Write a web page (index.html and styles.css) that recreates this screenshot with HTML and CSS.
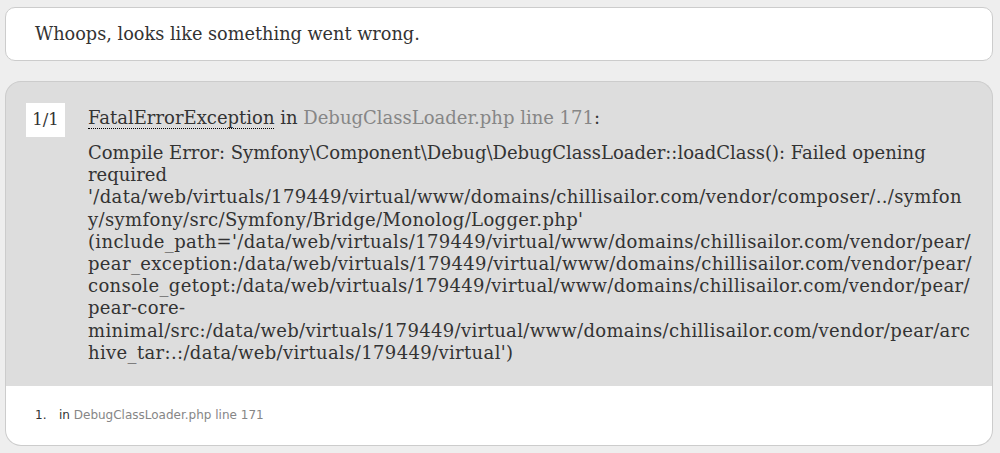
FILE: index.html
```html
<!DOCTYPE html>
<html>
<head>
<meta charset="utf-8">
<title>Whoops, looks like something went wrong.</title>
<link rel="stylesheet" href="styles.css">
</head>
<body>
<div class="page">
  <h1 class="headline">Whoops, looks like something went wrong.</h1>
  <div class="exception">
    <span class="counter">1/1</span>
    <div class="exception-body">
      <h2 class="title"><abbr class="abbr" title="Symfony\Component\Debug\Exception\FatalErrorException">FatalErrorException</abbr> in <a class="link">DebugClassLoader.php line 171</a>:</h2>
      <div class="message">
        <span class="line">Compile Error: Symfony\Component\Debug\DebugClassLoader::loadClass(): Failed opening</span>
        <span class="line">required</span>
        <span class="line path">'/data/web/virtuals/179449/virtual/www/domains/chillisailor.com/vendor/composer/../symfon</span>
        <span class="line path">y/symfony/src/Symfony/Bridge/Monolog/Logger.php'</span>
        <span class="line path">(include_path='/data/web/virtuals/179449/virtual/www/domains/chillisailor.com/vendor/pear/</span>
        <span class="line path">pear_exception:/data/web/virtuals/179449/virtual/www/domains/chillisailor.com/vendor/pear/</span>
        <span class="line path">console_getopt:/data/web/virtuals/179449/virtual/www/domains/chillisailor.com/vendor/pear/</span>
        <span class="line path">pear-core-</span>
        <span class="line path">minimal/src:/data/web/virtuals/179449/virtual/www/domains/chillisailor.com/vendor/pear/arc</span>
        <span class="line path">hive_tar:.:/data/web/virtuals/179449/virtual')</span>
      </div>
    </div>
  </div>
  <div class="traces">
    <div class="trace"><span class="trace-num">1.</span><span class="trace-text">in <a class="link">DebugClassLoader.php line 171</a></span></div>
  </div>
</div>
</body>
</html>
```
FILE: styles.css
```css
html {
  background: #eee;
}
body {
  margin: 0;
  color: #333;
}
.page {
  padding: 7px 7px 0 5px;
}
.headline {
  margin: 0 0 20px;
  height: 52px;
  padding: 0 28px 0 29px;
  background: #fff;
  border: 1px solid #ccc;
  border-radius: 10px;
  font: normal 17.7px/52px "DejaVu Serif", Georgia, serif;
  color: #333;
}
.exception {
  display: flex;
  align-items: flex-start;
  background: #ddd;
  border: 1px solid #ccc;
  border-bottom: none;
  border-radius: 16px 16px 0 0;
  padding: 21px 20px 22px 20px;
}
.counter {
  flex: none;
  width: 27px;
  padding: 6px;
  background: #fff;
  font: 16.5px/22px "DejaVu Serif", Georgia, serif;
  color: #333;
  text-align: center;
  white-space: nowrap;
}
.exception-body {
  margin-left: 23px;
  min-width: 0;
}
.title {
  margin: 4px 0 13px;
  font: normal 18px/22px "DejaVu Serif", Georgia, serif;
  color: #333;
}
.abbr {
  text-decoration: none;
  border-bottom: 1px dotted #000;
}
.link {
  color: #868686;
  text-decoration: none;
}
.message {
  font: 18px/22.2px "DejaVu Serif", Georgia, serif;
  color: #333;
}
.line {
  display: block;
  white-space: nowrap;
}
.path {
  letter-spacing: 0.35px;
}
.traces {
  background: #fff;
  border: 1px solid #ccc;
  border-top: none;
  border-radius: 0 0 16px 16px;
  padding: 22px 28px 22px 29px;
  font: 12px/15px "DejaVu Sans", Verdana, sans-serif;
  color: #333;
}
.trace {
  display: flex;
}
.trace-num {
  width: 24px;
}
```
